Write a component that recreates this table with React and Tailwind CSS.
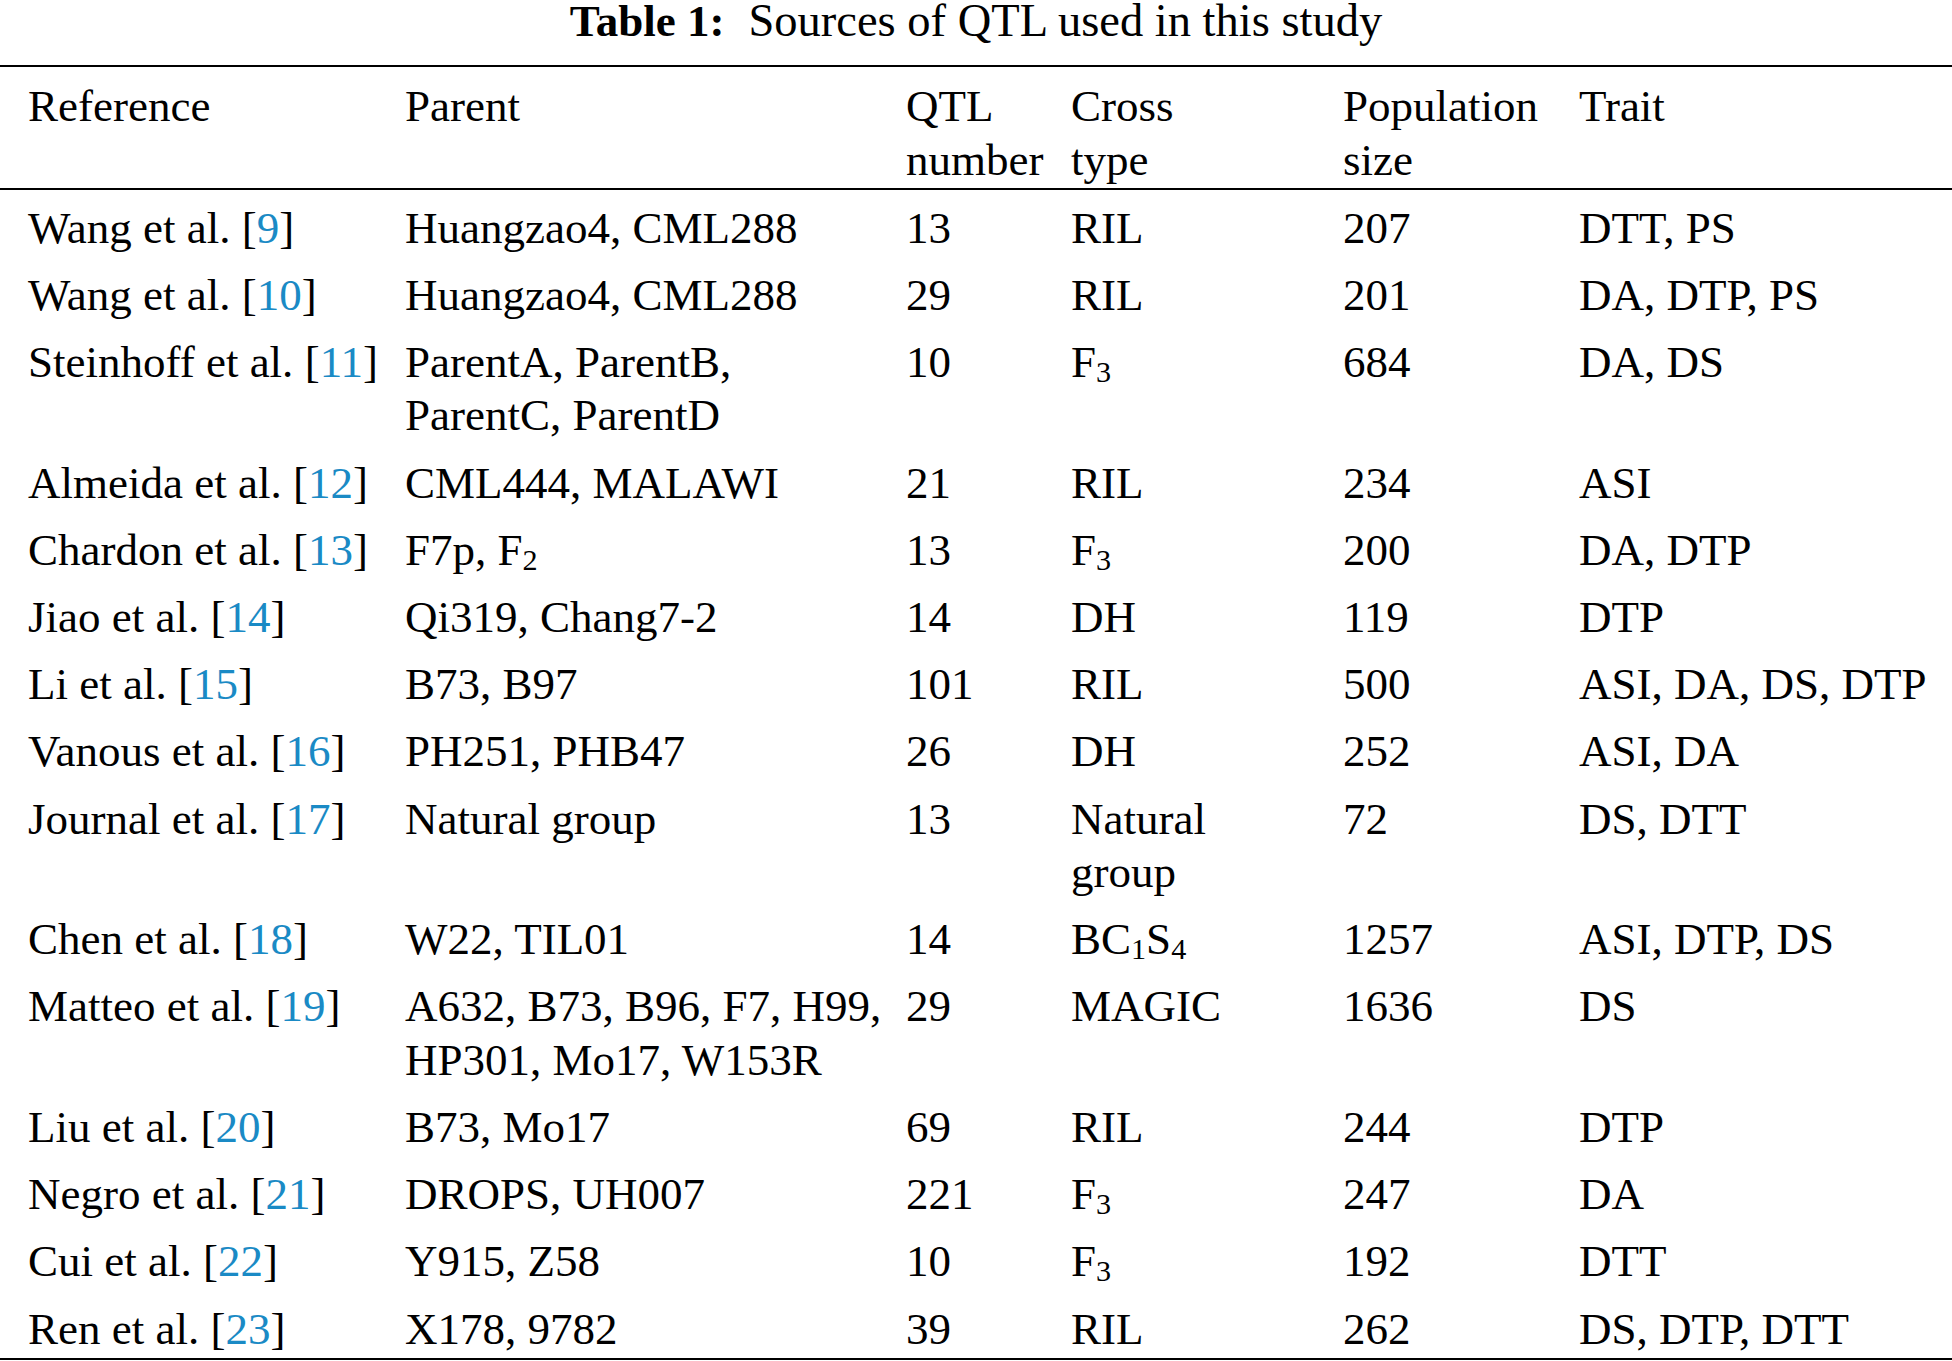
const Ref = ({ name, n }) => (
  <>
    {name} [<span className="text-[#1a8ac5]">{n}</span>]
  </>
);

const Sub = ({ children }) => (
  <sub className="text-[0.67em] bottom-[-0.16em]">{children}</sub>
);

const F3 = () => (
  <>
    F<Sub>3</Sub>
  </>
);

const rows = [
  [<Ref name="Wang et al." n="9" />, ["Huangzao4, CML288"], "13", ["RIL"], "207", "DTT, PS"],
  [<Ref name="Wang et al." n="10" />, ["Huangzao4, CML288"], "29", ["RIL"], "201", "DA, DTP, PS"],
  [<Ref name="Steinhoff et al." n="11" />, ["ParentA, ParentB,", "ParentC, ParentD"], "10", [<F3 />], "684", "DA, DS"],
  [<Ref name="Almeida et al." n="12" />, ["CML444, MALAWI"], "21", ["RIL"], "234", "ASI"],
  [<Ref name="Chardon et al." n="13" />, [<>F7p, F<Sub>2</Sub></>], "13", [<F3 />], "200", "DA, DTP"],
  [<Ref name="Jiao et al." n="14" />, ["Qi319, Chang7-2"], "14", ["DH"], "119", "DTP"],
  [<Ref name="Li et al." n="15" />, ["B73, B97"], "101", ["RIL"], "500", "ASI, DA, DS, DTP"],
  [<Ref name="Vanous et al." n="16" />, ["PH251, PHB47"], "26", ["DH"], "252", "ASI, DA"],
  [<Ref name="Journal et al." n="17" />, ["Natural group"], "13", ["Natural", "group"], "72", "DS, DTT"],
  [<Ref name="Chen et al." n="18" />, ["W22, TIL01"], "14", [<>BC<Sub>1</Sub>S<Sub>4</Sub></>], "1257", "ASI, DTP, DS"],
  [<Ref name="Matteo et al." n="19" />, ["A632, B73, B96, F7, H99,", "HP301, Mo17, W153R"], "29", ["MAGIC"], "1636", "DS"],
  [<Ref name="Liu et al." n="20" />, ["B73, Mo17"], "69", ["RIL"], "244", "DTP"],
  [<Ref name="Negro et al." n="21" />, ["DROPS, UH007"], "221", [<F3 />], "247", "DA"],
  [<Ref name="Cui et al." n="22" />, ["Y915, Z58"], "10", [<F3 />], "192", "DTT"],
  [<Ref name="Ren et al." n="23" />, ["X178, 9782"], "39", ["RIL"], "262", "DS, DTP, DTT"],
];

const cols = "grid grid-cols-[405px_501px_165px_272px_236px_1fr]";

function Lines({ lines }) {
  return (
    <div>
      {lines.map((l, i) => (
        <div key={i} className="whitespace-nowrap">
          {l}
        </div>
      ))}
    </div>
  );
}

export default function App() {
  return (
    <div className="w-[1952px] h-[1361px] overflow-hidden bg-white text-black font-['Liberation_Serif','Times_New_Roman',serif] text-[45px] leading-[53.5px]">
      {/* caption */}
      <div className="-mt-[6px] mb-[17.5px] h-[53.5px] text-center whitespace-nowrap">
        <span className="font-bold">Table 1:</span>
        <span className="ml-[24px] text-[46.5px]">Sources of QTL used in this study</span>
      </div>

      <div className="border-t-2 border-black">
        <div className={`${cols} pt-[13px] pb-[1px] border-b-2 border-black`}>
          <div className="pl-[28px]">Reference</div>
          <div>Parent</div>
          <Lines lines={["QTL", "number"]} />
          <Lines lines={["Cross", "type"]} />
          <Lines lines={["Population", "size"]} />
          <div>Trait</div>
        </div>

        <div className="border-b-2 border-black">
          {rows.map((r, i) => (
            <div key={i} className={`${cols} pt-[11.5px] pb-[2.2px]`}>
              <div className="pl-[28px] whitespace-nowrap">{r[0]}</div>
              <Lines lines={r[1]} />
              <div>{r[2]}</div>
              <Lines lines={r[3]} />
              <div>{r[4]}</div>
              <div className="whitespace-nowrap">{r[5]}</div>
            </div>
          ))}
        </div>
      </div>
    </div>
  );
}
